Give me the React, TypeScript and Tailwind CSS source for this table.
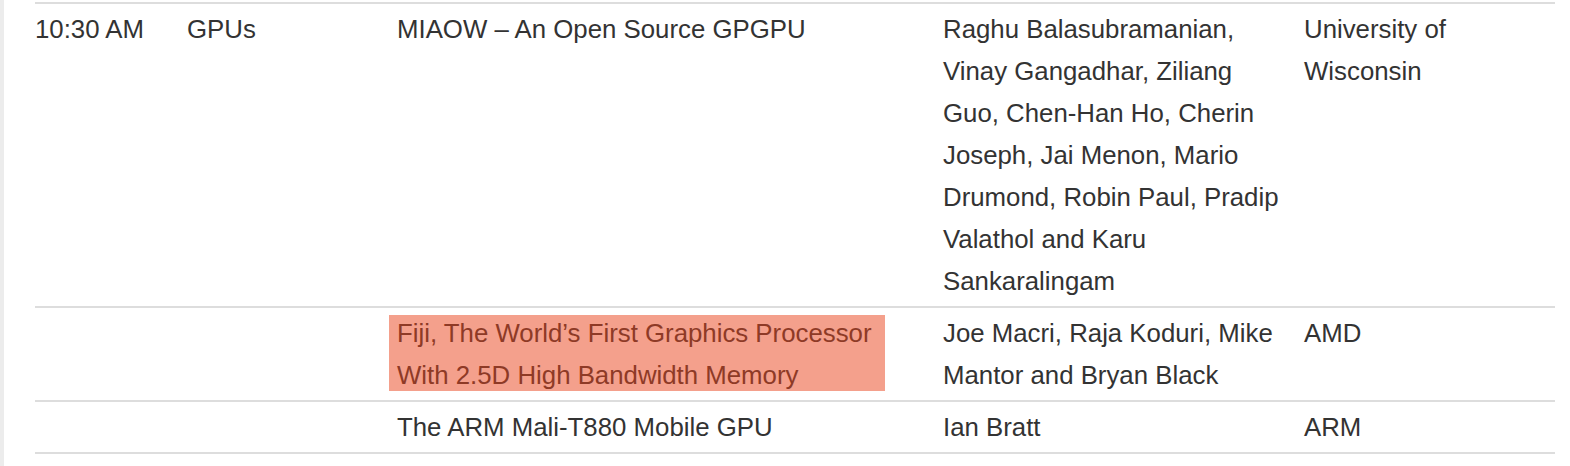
import React from "react";

const font = { fontFamily: '"Liberation Sans", Arial, Helvetica, sans-serif' };

export default function App() {
  return (
    <div className="flex min-h-[466px] w-[1570px] bg-white" style={font}>
      <div className="w-[4px] shrink-0 bg-[#ececec]" />
      <div className="ml-[31px] mt-[2px] w-[1520px] text-[25.8px] leading-[42px] text-[#333]">
        <div className="grid grid-cols-[152px_210px_546px_361px_1fr] border-t-2 border-[#dddddd] py-[4px]">
          <div>10:30 AM</div>
          <div>GPUs</div>
          <div className="pr-[45px]">MIAOW – An Open Source GPGPU</div>
          <div className="pr-[16px]">
            Raghu Balasubramanian, Vinay Gangadhar, Ziliang Guo, Chen-Han Ho, Cherin Joseph, Jai Menon, Mario Drumond, Robin Paul, Pradip Valathol and Karu Sankaralingam
          </div>
          <div>University of Wisconsin</div>
        </div>
        <div className="grid grid-cols-[152px_210px_546px_361px_1fr] border-t-2 border-[#dddddd] py-[4px]">
          <div />
          <div />
          <div className="relative pr-[45px]">
            <div className="absolute left-[-8px] top-[3px] h-[76px] w-[496px] bg-[#f4a08c]" />
            <div className="relative text-[#8e3a26]">
              Fiji, The World’s First Graphics Processor With 2.5D High Bandwidth Memory
            </div>
          </div>
          <div className="pr-[16px]">Joe Macri, Raja Koduri, Mike Mantor and Bryan Black</div>
          <div>AMD</div>
        </div>
        <div className="grid grid-cols-[152px_210px_546px_361px_1fr] border-y-2 border-[#dddddd] py-[4px]">
          <div />
          <div />
          <div className="pr-[45px]">The ARM Mali-T880 Mobile GPU</div>
          <div className="pr-[16px]">Ian Bratt</div>
          <div>ARM</div>
        </div>
      </div>
    </div>
  );
}
